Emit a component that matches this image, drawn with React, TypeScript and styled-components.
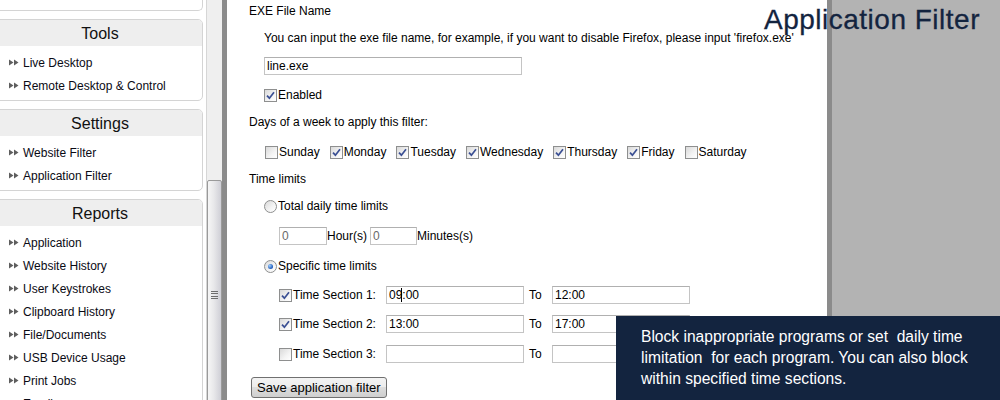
import styled, { createGlobalStyle, css } from "styled-components";

const GlobalStyle = createGlobalStyle`
    html, body {
        margin: 0;
        padding: 0;
        background: #ffffff;
    }
    body {
        font-family: "Liberation Sans", Arial, sans-serif;
        color: #000;
        overflow: hidden;
    }
`;

const NAVY = "#13243f";

const Page = styled.div`
    position: relative;
    display: flex;
    width: 1000px;
    height: 400px;
    overflow: hidden;
    background: #fff;
`;

/* ---------- sidebar ---------- */

const Sidebar = styled.nav`
    width: 206px;
    flex-shrink: 0;
    display: flex;
    flex-direction: column;
    gap: 8px;
`;

const Panel = styled.section<{ $cut?: boolean }>`
    box-sizing: border-box;
    margin-left: -3px;
    width: 206px;
    border: 1px solid #d4d4d4;
    border-radius: 0 5px 5px 0;
    background: #fff;
    flex-shrink: 0;
    ${(p) =>
        p.$cut &&
        css`
            height: 11px;
            border-top: none;
            border-radius: 0 0 5px 0;
        `}
`;

const PanelTitle = styled.h3`
    margin: 0;
    height: 26px;
    line-height: 27px;
    background: #eeeeee;
    border-top-right-radius: 4px;
    text-align: center;
    font-size: 16px;
    font-weight: normal;
    color: #111;
`;

const ItemList = styled.ul`
    list-style: none;
    margin: 0;
    padding: 5px 0 3px;
`;

const Item = styled.li`
    display: flex;
    align-items: center;
    gap: 4px;
    height: 23px;
    padding-left: 11px;
    font-size: 12px;
    color: #0a0a14;
    white-space: nowrap;
`;

const Arrows = () => (
    <svg width="10" height="7" viewBox="0 0 10 7">
        <path d="M0 0.5 L4.5 3.5 L0 6.5 Z M5 0.5 L9.5 3.5 L5 6.5 Z" fill="#5e5e5e" />
    </svg>
);

const Scrollbar = styled.div`
    box-sizing: border-box;
    width: 16px;
    flex-shrink: 0;
    display: flex;
    flex-direction: column;
    padding-top: 180px;
    background: #efefef;
    border-left: 1px solid #d6d6d6;
`;

const Thumb = styled.div`
    box-sizing: border-box;
    height: 240px;
    flex-shrink: 0;
    border: 1px solid #9a9a9a;
    border-radius: 2px;
    background: linear-gradient(to right, #f6f6f6, #e8e8ea 45%, #cfcfd6);
    display: flex;
    justify-content: center;
    padding-top: 110px;
`;

const Grip = styled.div`
    width: 7px;
    height: 9px;
    background: repeating-linear-gradient(
        to bottom,
        #6e6e6e 0,
        #6e6e6e 1px,
        transparent 1px,
        transparent 2.5px
    );
`;

const Divider = styled.div`
    width: 5px;
    flex-shrink: 0;
    background: #8b8b8b;
`;

/* ---------- content ---------- */

const Content = styled.main`
    box-sizing: border-box;
    width: 600px;
    flex-shrink: 0;
    padding: 2px 0 0 22px;
    font-size: 12px;
    background: #fff;
`;

const Row = styled.div<{ $mt?: number; $indent?: number; $h?: number }>`
    display: flex;
    align-items: center;
    height: ${(p) => p.$h ?? 18}px;
    margin-top: ${(p) => p.$mt ?? 0}px;
    padding-left: ${(p) => p.$indent ?? 0}px;
    white-space: nowrap;
`;

const Box = styled.span<{ $round?: boolean }>`
    box-sizing: border-box;
    display: inline-flex;
    align-items: center;
    justify-content: center;
    width: 13px;
    height: 13px;
    flex-shrink: 0;
    margin-right: 1px;
    border: 1px solid #8e8f8f;
    border-radius: ${(p) => (p.$round ? "50%" : "0")};
    background: linear-gradient(135deg, #d9d9d9, #f4f4f4 60%, #ffffff);
`;

const Dot = styled.span`
    width: 5px;
    height: 5px;
    border-radius: 50%;
    background: radial-gradient(circle at 35% 35%, #9fd0ff, #1d58b8 70%);
`;

const Check = ({ on }: { on?: boolean }) => (
    <Box>
        {on && (
            <svg width="9" height="9" viewBox="0 0 9 9">
                <path
                    d="M1 4.6 L3.4 7.2 L8 1.2"
                    fill="none"
                    stroke="#3a4f93"
                    strokeWidth="1.7"
                />
            </svg>
        )}
    </Box>
);

const Radio = ({ on }: { on?: boolean }) => <Box $round>{on && <Dot />}</Box>;

const Day = styled.label`
    display: flex;
    align-items: center;
    margin-right: 10px;
`;

const Field = styled.input<{ $w: number; $muted?: boolean }>`
    box-sizing: border-box;
    width: ${(p) => p.$w}px;
    height: 18px;
    margin: 0;
    padding: 0 2px;
    border: 1px solid #c4c4c4;
    border-top-color: #b0b0b0;
    font-family: "Liberation Sans", Arial, sans-serif;
    font-size: 12px;
    color: ${(p) => (p.$muted ? "#6a6a6a" : "#000")};
    background: #fff;
    outline: none;
`;

const CaretWrap = styled.span`
    position: relative;
    display: inline-flex;
`;

const Caret = styled.span`
    position: absolute;
    left: 15px;
    top: 2px;
    width: 1px;
    height: 14px;
    background: #000;
`;

const Unit = styled.span`
    margin-right: 3px;
`;

const SectionLabel = styled.label`
    display: flex;
    align-items: center;
    width: 107px;
`;

const ToLabel = styled.span`
    box-sizing: border-box;
    width: 28px;
    padding-left: 5px;
`;

const SaveButton = styled.button`
    box-sizing: border-box;
    height: 21px;
    margin-left: 2px;
    padding: 0 5px;
    border: 1px solid #707070;
    border-radius: 3px;
    background: linear-gradient(#f3f3f3, #ececec 50%, #dddddd 50%, #cfcfcf);
    font-family: "Liberation Sans", Arial, sans-serif;
    font-size: 13px;
    color: #000;
`;

const Backdrop = styled.div`
    flex: 1;
    background: #b3b3b3;
`;

/* ---------- overlays ---------- */

const Title = styled.h1`
    position: absolute;
    top: 6px;
    left: 764px;
    margin: 0;
    font-size: 28px;
    line-height: 28px;
    letter-spacing: 0.5px;
    font-weight: normal;
    color: #13243f;
    -webkit-text-stroke: 0.3px #13243f;
    white-space: nowrap;
`;

const InfoBox = styled.aside`
    position: absolute;
    right: 0;
    bottom: 0;
    box-sizing: border-box;
    width: 384px;
    height: 84px;
    padding: 10px 0 0 25px;
    background: ${NAVY};
    color: #fff;
    font-size: 15.6px;
    line-height: 21px;
    white-space: pre;
`;

const sidebar = [
    { title: "Tools", items: ["Live Desktop", "Remote Desktop & Control"] },
    { title: "Settings", items: ["Website Filter", "Application Filter"] },
    {
        title: "Reports",
        items: [
            "Application",
            "Website History",
            "User Keystrokes",
            "Clipboard History",
            "File/Documents",
            "USB Device Usage",
            "Print Jobs",
            "Emails",
        ],
    },
];

const days = [
    { name: "Sunday", on: false },
    { name: "Monday", on: true },
    { name: "Tuesday", on: true },
    { name: "Wednesday", on: true },
    { name: "Thursday", on: true },
    { name: "Friday", on: true },
    { name: "Saturday", on: false },
];

const sections = [
    { on: true, from: "09:00", to: "12:00", mt: 11, caret: true },
    { on: true, from: "13:00", to: "17:00", mt: 11 },
    { on: false, from: "", to: "", mt: 12 },
];

export default function App() {
    return (
        <Page>
            <GlobalStyle />
            <Sidebar>
                <Panel $cut />
                {sidebar.map((group) => (
                    <Panel key={group.title}>
                        <PanelTitle>{group.title}</PanelTitle>
                        <ItemList>
                            {group.items.map((item) => (
                                <Item key={item}>
                                    <Arrows />
                                    {item}
                                </Item>
                            ))}
                        </ItemList>
                    </Panel>
                ))}
            </Sidebar>
            <Scrollbar>
                <Thumb>
                    <Grip />
                </Thumb>
            </Scrollbar>
            <Divider />
            <Content>
                <Row>EXE File Name</Row>
                <Row $mt={9} $indent={15}>
                    You can input the exe file name, for example, if you want to disable
                    Firefox, please input 'firefox.exe'
                </Row>
                <Row $mt={10} $indent={15}>
                    <Field $w={258} value="line.exe" readOnly />
                </Row>
                <Row $mt={11} $indent={15}>
                    <Check on />
                    Enabled
                </Row>
                <Row $mt={9}>Days of a week to apply this filter:</Row>
                <Row $mt={12} $indent={16}>
                    {days.map((d) => (
                        <Day key={d.name}>
                            <Check on={d.on} />
                            {d.name}
                        </Day>
                    ))}
                </Row>
                <Row $mt={9}>Time limits</Row>
                <Row $mt={9} $indent={15}>
                    <Radio />
                    Total daily time limits
                </Row>
                <Row $mt={12} $indent={30}>
                    <Field $w={48} $muted value="0" readOnly />
                    <Unit>Hour(s)</Unit>
                    <Field $w={47} $muted value="0" readOnly />
                    <Unit>Minutes(s)</Unit>
                </Row>
                <Row $mt={12} $indent={15}>
                    <Radio on />
                    Specific time limits
                </Row>
                {sections.map((s, i) => (
                    <Row key={i} $mt={s.mt} $indent={30}>
                        <SectionLabel>
                            <Check on={s.on} />
                            Time Section {i + 1}:
                        </SectionLabel>
                        <CaretWrap>
                            <Field $w={138} value={s.from} readOnly />
                            {s.caret && <Caret />}
                        </CaretWrap>
                        <ToLabel>To</ToLabel>
                        <Field $w={138} value={s.to} readOnly />
                    </Row>
                ))}
                <Row $mt={14} $h={21}>
                    <SaveButton>Save application filter</SaveButton>
                </Row>
            </Content>
            <Divider />
            <Backdrop />
            <Title>Application Filter</Title>
            <InfoBox>
                {"Block inappropriate programs or set  daily time\nlimitation  for each program. You can also block\nwithin specified time sections."}
            </InfoBox>
        </Page>
    );
}
